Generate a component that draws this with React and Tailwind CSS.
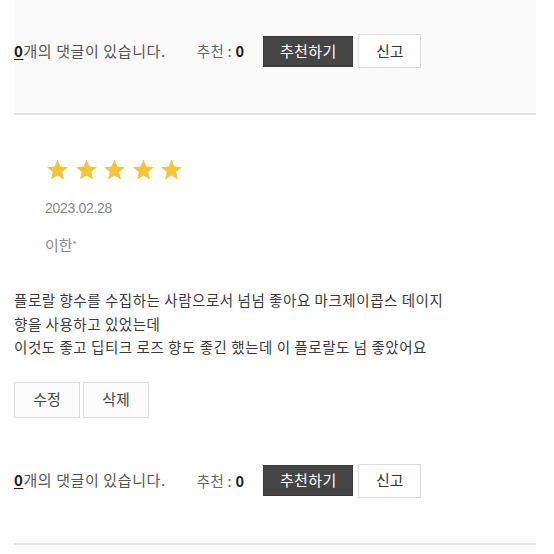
import React from 'react';

const FONT = "font-['Noto_Sans_CJK_KR','Noto_Sans',sans-serif]";

function Star() {
  return (
    <svg width="25" height="24" viewBox="0 0 24 24" aria-hidden="true">
      <polygon
        points="12,1.5 14.9,8.6 22.5,9.2 16.7,14.1 18.5,21.6 12,17.6 5.5,21.6 7.3,14.1 1.5,9.2 9.1,8.6"
        fill="#f3c43c"
      />
    </svg>
  );
}

function CommentBar({ className = '' }) {
  return (
    <div className={`pt-[46px] pb-[45px] border-b-2 border-[#e4e4e4] ${className}`}>
      <div className="flex items-center h-[34px]">
        <span className="text-[15px] text-[#555] tracking-[0.6px]">
          <b className="text-[#222] underline underline-offset-2 font-bold">0</b>개의 댓글이 있습니다.
        </span>
        <span className="ml-[31px] text-[14.5px] text-[#666] tracking-[0.3px]">
          추천 : <b className="text-[#222] font-bold">0</b>
        </span>
        <button
          type="button"
          className="ml-[19px] w-[90px] h-[31px] bg-[#454545] text-white text-[15px] tracking-[0.4px] border border-[#3a3a3a]"
        >
          추천하기
        </button>
        <button
          type="button"
          className="ml-[5px] w-[63px] h-[34px] bg-white text-[#333] text-[15px] border border-[#dcdcdc]"
        >
          신고
        </button>
      </div>
    </div>
  );
}

export default function App() {
  return (
    <div className={`w-[554px] h-[554px] overflow-hidden bg-white ${FONT}`}>
      <div className="ml-[14px] mr-[18px]">
        <CommentBar className="-mt-[12px] bg-[#fafafa]" />

        <section className="pt-[43px]">
          <div className="pl-[31px]">
            <div className="flex gap-[3.5px]">
              <Star />
              <Star />
              <Star />
              <Star />
              <Star />
            </div>
            <div className="mt-[17px] text-[14px] leading-[18px] text-[#888] font-['Liberation_Sans',sans-serif] tracking-[-0.3px]">
              2023.02.28
            </div>
            <div className="mt-[18px] text-[15px] leading-[20px] text-[#888]">
              이한<span className="text-[9px] align-top">*</span>
            </div>
          </div>

          <p className="mt-[33px] text-[14.5px] leading-[23.5px] text-[#3a3a3a] tracking-[0.55px]">
            플로랄 향수를 수집하는 사람으로서 넘넘 좋아요 마크제이콥스 데이지
            <br />
            향을 사용하고 있었는데
            <br />
            이것도 좋고 딥티크 로즈 향도 좋긴 했는데 이 플로랄도 넘 좋았어요
          </p>

          <div className="mt-[23px] flex gap-[3px]">
            <button
              type="button"
              className="w-[66px] h-[36px] bg-[#fbfbfb] border border-[#dedede] text-[15px] text-[#444]"
            >
              수정
            </button>
            <button
              type="button"
              className="w-[66px] h-[36px] bg-[#fbfbfb] border border-[#dedede] text-[15px] text-[#444]"
            >
              삭제
            </button>
          </div>
        </section>

        <CommentBar className="bg-white" />
      </div>
    </div>
  );
}
